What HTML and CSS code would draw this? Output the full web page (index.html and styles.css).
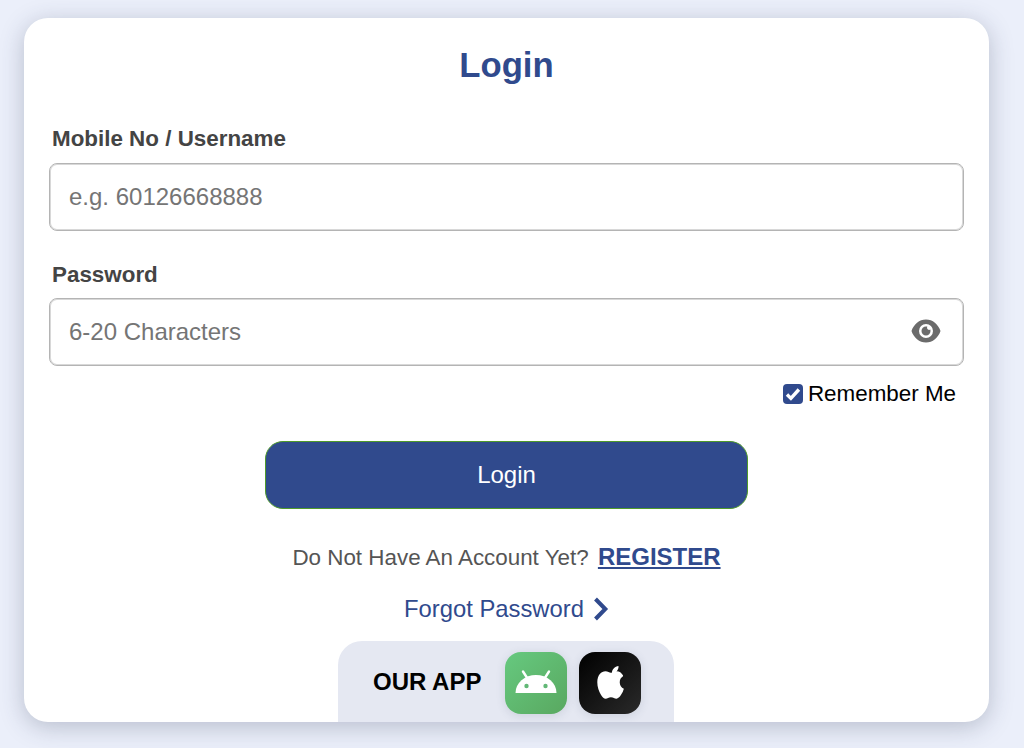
FILE: index.html
```html
<!DOCTYPE html>
<html lang="en">
<head>
<meta charset="utf-8">
<title>Login</title>
<link rel="stylesheet" href="styles.css">
</head>
<body>
<main class="card">
  <h1 class="title">Login</h1>
  <form class="form">
    <label class="label" for="user">Mobile No / Username</label>
    <div class="field"><input class="input" id="user" type="text" placeholder="e.g. 60126668888"></div>
    <label class="label label-second" for="pass">Password</label>
    <div class="field">
      <input class="input" id="pass" type="text" placeholder="6-20 Characters">
      <svg class="eye" viewBox="0 0 30 24" aria-hidden="true">
        <path fill="#6b6b6b" fill-rule="evenodd" d="M15 .5C8.300.5 2.700 5.300.5 12c2.200 6.700 7.800 11.500 14.500 11.500S27.300 18.700 29.500 12C27.300 5.300 21.700.5 15 .5zM15 19a7 7 0 1 1 0-14 7 7 0 0 1 0 14z"/>
        <path fill="#6b6b6b" fill-rule="evenodd" d="M15 7.500a4.500 4.500 0 1 0 4.500 4.500c0-.5-.1-1-.2-1.400a2.200 2.200 0 0 1-3-3c-.4-.1-.8-.1-1.300-.1z"/>
      </svg>
    </div>
    <div class="remember">
      <span class="check"><svg viewBox="0 0 20 20" aria-hidden="true"><path d="M4 10.500l3.900 3.900 8-8.900" fill="none" stroke="#fff" stroke-width="3.400"/></svg></span>
      <span>Remember Me</span>
    </div>
    <button class="submit" type="button">Login</button>
  </form>
  <p class="register">Do Not Have An Account Yet? <a class="register-link" href="#">REGISTER</a></p>
  <a class="forgot" href="#">Forgot Password
    <svg class="chevron" viewBox="0 0 16 24" aria-hidden="true"><path d="M2.500 2l9.800 10-9.800 10" fill="none" stroke="#304a8d" stroke-width="4"/></svg>
  </a>
  <section class="app">
    <span class="app-title">OUR APP</span>
    <a class="app-icon android" href="#" aria-label="Android">
      <svg viewBox="0 0 62 62" aria-hidden="true">
        <path d="M18 19.500l4.800 7.500M44 19.500l-4.800 7.500" fill="none" stroke="#fff" stroke-width="2.400" stroke-linecap="round"/>
        <path fill="#fff" d="M10.500 41a20.500 18 0 0 1 41 0z"/>
        <circle cx="21.500" cy="34" r="2.200" fill="#62b876"/>
        <circle cx="40.500" cy="34" r="2.200" fill="#62b876"/>
      </svg>
    </a>
    <a class="app-icon apple" href="#" aria-label="Apple">
      <svg viewBox="0 0 62 62" aria-hidden="true">
        <path fill="#fff" d="M39.500 14c.2 2-.5 3.800-1.700 5.200-1.200 1.400-3 2.500-4.900 2.300-.2-1.900.6-3.800 1.800-5.100 1.200-1.400 3.200-2.300 4.800-2.400z"/>
        <path fill="#fff" transform="translate(31.500 35) scale(.88 .97) translate(-30.800 -37)" d="M45 26c-2.500 1.500-3.800 3.600-3.700 6.300.1 3 1.700 5.200 4.700 6.500-.7 2.200-1.800 4.300-3.200 6.300-1.800 2.600-3.400 3.900-5.200 3.900-2.400 0-3.400-1.500-6.300-1.500-2.800 0-3.800 1.500-6.100 1.500-1.800 0-3.500-1.500-5.300-4.100-2.300-3.300-4.100-8.200-4.100-12.900 0-7.200 4.600-11.200 9.300-11.200 2.500 0 4.500 1.600 6.100 1.600 1.500 0 3.800-1.700 6.700-1.700 3 0 5.400 1.600 7.100 4.300z"/>
      </svg>
    </a>
  </section>
</main>
</body>
</html>
```
FILE: styles.css
```css
* { box-sizing: border-box; }

html, body {
  margin: 0;
  height: 748px;
  overflow: hidden;
}

body {
  background: #ebeffa;
  padding: 18px 35px 26px 24px;
  font-family: "Liberation Sans", Arial, sans-serif;
}

.card {
  height: 704px;
  background: #fff;
  border-radius: 24px;
  box-shadow: 0 5px 24px rgba(50, 60, 90, 0.28);
  padding: 25px 25px 0;
  display: flex;
  flex-direction: column;
  align-items: center;
  overflow: hidden;
}

.title {
  margin: 0;
  font-size: 34.700px;
  line-height: 44px;
  font-weight: 700;
  color: #304a8d;
  text-align: center;
}

.form {
  width: 100%;
  display: flex;
  flex-direction: column;
  margin-top: 38px;
}

.label {
  font-size: 22.400px;
  line-height: 28px;
  font-weight: 700;
  color: #444;
  padding-left: 3px;
  margin-bottom: 10px;
}

.label-second { margin-top: 30px; margin-bottom: 9px; }

.field { position: relative; }

.input {
  display: block;
  width: 100%;
  height: 68px;
  border: 1px solid #b4b4b4;
  box-shadow: inset 0 0 0 1px #d8d8d8;
  border-radius: 8px;
  padding: 0 19px;
  font: 400 24px "Liberation Sans", Arial, sans-serif;
  color: #444;
  background: #fff;
  outline: none;
}

.input::placeholder { color: #757575; opacity: 1; }

.eye {
  position: absolute;
  top: 21px;
  right: 23px;
  width: 30px;
  height: 24px;
}

.remember {
  display: flex;
  align-items: center;
  justify-content: flex-end;
  gap: 5px;
  margin-top: 14px;
  padding-right: 8px;
  font-size: 22.400px;
  line-height: 28px;
  color: #000;
}

.check {
  width: 20px;
  height: 20px;
  border-radius: 4px;
  background: #304a8d;
  display: block;
}

.check svg { display: block; width: 20px; height: 20px; }

.submit {
  display: block;
  align-self: center;
  width: 483px;
  height: 68px;
  margin-top: 33px;
  background: #304a8d;
  border: 1px solid #4f9a2a;
  border-radius: 18px;
  color: #fff;
  font: 400 24px "Liberation Sans", Arial, sans-serif;
}

.register {
  margin: 34px 0 0;
  font-size: 22.400px;
  line-height: 28px;
  color: #555;
  text-align: center;
}

.register-link {
  margin-left: 3px;
  font-size: 24px;
  font-weight: 700;
  color: #304a8d;
  text-decoration: underline;
}

.forgot {
  display: flex;
  align-items: center;
  gap: 9px;
  margin-top: 23px;
  font-size: 23.800px;
  line-height: 28px;
  color: #304a8d;
  text-decoration: none;
}

.chevron { width: 16px; height: 24px; }

.app {
  width: 336px;
  height: 90px;
  margin-top: 18px;
  margin-left: -1px;
  flex: none;
  background: #e5e8f2;
  border-radius: 24px 24px 0 0;
  padding: 11px 35px 0;
  display: flex;
  align-items: flex-start;
}

.app-title {
  font-size: 24px;
  line-height: 60px;
  font-weight: 700;
  color: #000;
  white-space: nowrap;
  margin-right: 24px;
}

.app-icon {
  width: 62px;
  height: 62px;
  border-radius: 16px;
  display: block;
  flex: none;
  box-shadow: 0 2px 10px rgba(60, 70, 100, 0.14);
  margin-right: 12px;
}

.app-icon svg { display: block; width: 62px; height: 62px; }

.android { background: linear-gradient(135deg, #66c97f, #59a860); }

.apple { background: linear-gradient(135deg, #000, #2a2a2a); margin-right: 0; }
```
